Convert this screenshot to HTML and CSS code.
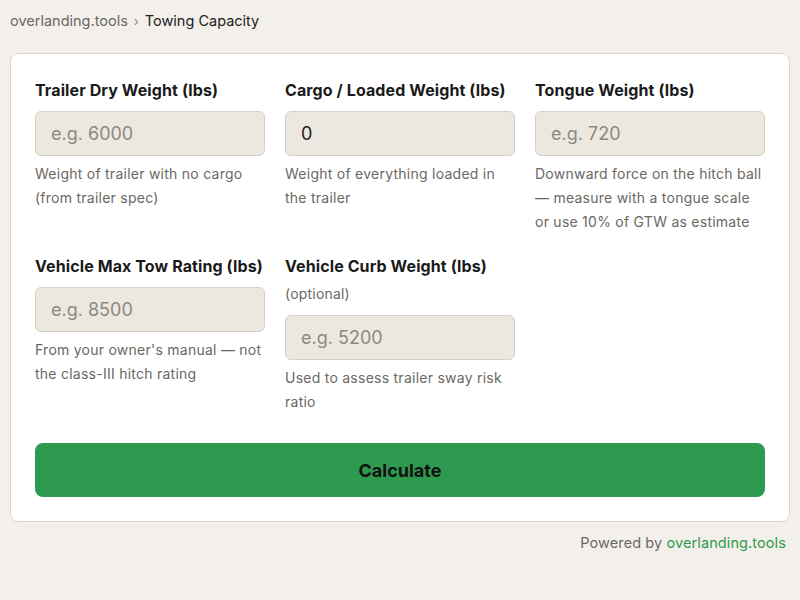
FILE: index.html
```html
<!DOCTYPE html>
<html lang="en">
<head>
<meta charset="utf-8">
<title>Towing Capacity</title>
<link rel="stylesheet" href="styles.css">
</head>
<body>
<nav class="crumbs"><a class="crumb-link" href="#">overlanding.tools</a><span class="sep">›</span><span class="crumb-current">Towing Capacity</span></nav>
<main class="card">
  <div class="grid">
    <div class="field">
      <label class="label" for="f1">Trailer Dry Weight (lbs)</label>
      <input class="input" id="f1" type="text" placeholder="e.g. 6000">
      <p class="hint">Weight of trailer with no cargo (from trailer spec)</p>
    </div>
    <div class="field">
      <label class="label" for="f2">Cargo / Loaded Weight (lbs)</label>
      <input class="input" id="f2" type="text" value="0">
      <p class="hint">Weight of everything loaded in the trailer</p>
    </div>
    <div class="field">
      <label class="label" for="f3">Tongue Weight (lbs)</label>
      <input class="input" id="f3" type="text" placeholder="e.g. 720">
      <p class="hint">Downward force on the hitch ball — measure with a tongue scale or use 10% of GTW as estimate</p>
    </div>
    <div class="field">
      <label class="label" for="f4">Vehicle Max Tow Rating (lbs)</label>
      <input class="input" id="f4" type="text" placeholder="e.g. 8500">
      <p class="hint">From your owner's manual — not the class-III hitch rating</p>
    </div>
    <div class="field">
      <label class="label" for="f5">Vehicle Curb Weight (lbs)<span class="optional">(optional)</span></label>
      <input class="input" id="f5" type="text" placeholder="e.g. 5200">
      <p class="hint">Used to assess trailer sway risk ratio</p>
    </div>
  </div>
  <button class="btn" type="button">Calculate</button>
</main>
<footer class="footer">Powered by <a class="footer-link" href="#">overlanding.tools</a></footer>
</body>
</html>
```
FILE: styles.css
```css
* { box-sizing: border-box; }
html, body { margin: 0; }
body {
  background: #f3f0eb;
  font-family: Inter, "Noto Sans", sans-serif;
  color: #1c1c1c;
  padding: 10px;
}
.crumbs {
  font-size: 14.5px;
  line-height: 22px;
  display: flex;
  align-items: center;
  gap: 6px;
  height: 22px;
}
.crumb-link { color: #6b6863; text-decoration: none; }
.sep { color: #8d8983; font-size: 13px; }
.crumb-current { color: #222; }
.card {
  margin-top: 21px;
  background: #fff;
  border: 1px solid #dcd8d1;
  border-radius: 8px;
  padding: 24px;
}
.grid {
  display: grid;
  grid-template-columns: repeat(3, minmax(0, 1fr));
  column-gap: 20px;
  row-gap: 20px;
}
.field { display: flex; flex-direction: column; min-width: 0; }
.label {
  font-size: 16px;
  font-weight: 700;
  line-height: 24px;
  letter-spacing: 0.1px;
  white-space: nowrap;
  color: #1a1a1a;
  margin-bottom: 9px;
}
.optional {
  display: block;
  font-size: 14px;
  font-weight: 400;
  letter-spacing: 0.2px;
  color: #6b6863;
  margin-top: 4px;
  line-height: 24px;
}
.input {
  width: 100%;
  min-width: 0;
  height: 45px;
  border: 1px solid #d6d1c7;
  background: #ece8df;
  border-radius: 6px;
  padding: 0 15px;
  font-family: inherit;
  font-size: 18px;
  color: #1c1c1c;
  outline: none;
}
.input::placeholder { color: #8c8882; }
.hint {
  margin: 6px 0 0;
  font-size: 14px;
  line-height: 24px;
  letter-spacing: 0.25px;
  color: #6b6863;
}
.btn {
  display: block;
  width: 100%;
  margin-top: 29px;
  height: 54px;
  border: none;
  border-radius: 8px;
  background: #2e9a4f;
  color: #111;
  font-family: inherit;
  font-size: 18px;
  font-weight: 700;
}
.footer {
  text-align: right;
  font-size: 14.5px;
  line-height: 22px;
  letter-spacing: 0.1px;
  margin-top: 10px;
  padding-right: 4px;
  color: #6b6863;
}
.footer-link { color: #2e9a4f; text-decoration: none; }
```
